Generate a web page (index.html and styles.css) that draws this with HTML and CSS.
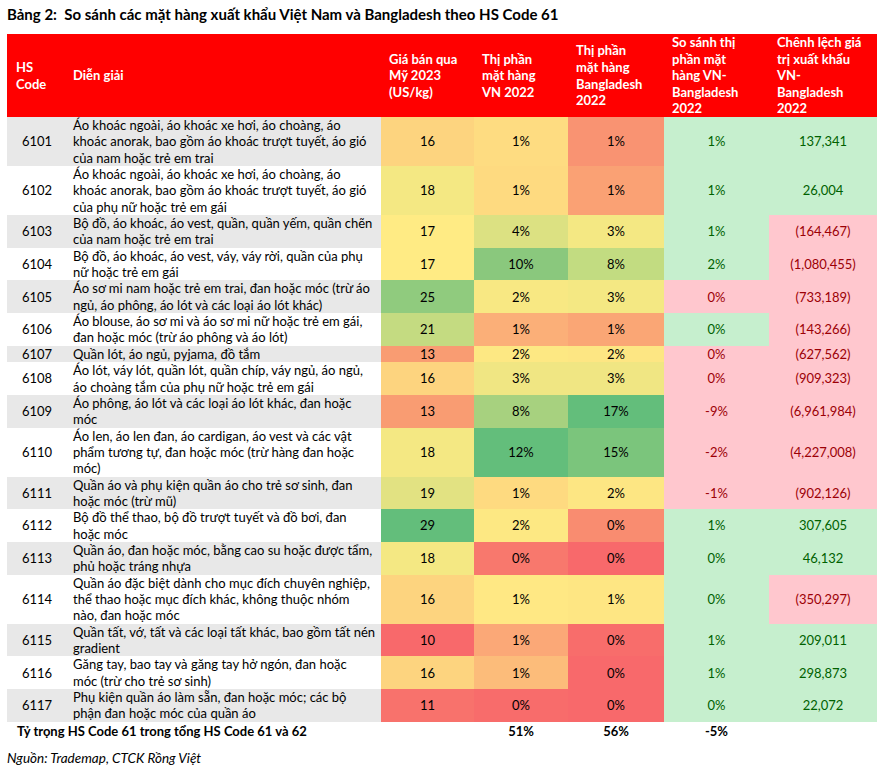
FILE: index.html
```html
<!DOCTYPE html>
<html lang="vi">
<head>
<meta charset="utf-8">
<title>Bảng 2</title>
<link rel="stylesheet" href="styles.css">
</head>
<body>
<div class="page">
  <h1 class="title">Bảng 2:&nbsp; So sánh các mặt hàng xuất khẩu Việt Nam và Bangladesh theo HS Code 61</h1>
  <table class="tbl">
    <colgroup>
      <col class="c-code"><col class="c-desc"><col class="c-price"><col class="c-vn"><col class="c-bd"><col class="c-cmp"><col class="c-diff">
    </colgroup>
    <thead>
      <tr>
        <th>HS<br>Code</th>
        <th>Diễn giải</th>
        <th>Giá bán qua<br>Mỹ 2023<br>(US/kg)</th>
        <th>Thị phần<br>mặt hàng<br>VN 2022</th>
        <th>Thị phần<br>mặt hàng<br>Bangladesh<br>2022</th>
        <th>So sánh thị<br>phần mặt<br>hàng VN-<br>Bangladesh<br>2022</th>
        <th>Chênh lệch giá<br>trị xuất khẩu<br>VN-<br>Bangladesh<br>2022</th>
      </tr>
    </thead>
    <tbody>
      <tr class="odd">
        <td class="code">6101</td>
        <td class="desc">Áo khoác ngoài, áo khoác xe hơi, áo choàng, áo<br>khoác anorak, bao gồm áo khoác trượt tuyết, áo gió<br>của nam hoặc trẻ em trai</td>
        <td class="num" style="background:#FDD47F">16</td>
        <td class="num" style="background:#FEDC81">1%</td>
        <td class="num" style="background:#F99372">1%</td>
        <td class="num good">1%</td>
        <td class="num good">137,341</td>
      </tr>
      <tr>
        <td class="code">6102</td>
        <td class="desc">Áo khoác ngoài, áo khoác xe hơi, áo choàng, áo<br>khoác anorak, bao gồm áo khoác trượt tuyết, áo gió<br>của phụ nữ hoặc trẻ em gái</td>
        <td class="num" style="background:#F4E883">18</td>
        <td class="num" style="background:#FEDA80">1%</td>
        <td class="num" style="background:#FAA174">1%</td>
        <td class="num good">1%</td>
        <td class="num good">26,004</td>
      </tr>
      <tr class="odd">
        <td class="code">6103</td>
        <td class="desc">Bộ đồ, áo khoác, áo vest, quần, quần yếm, quần chẽn<br>của nam hoặc trẻ em trai</td>
        <td class="num" style="background:#FFEB84">17</td>
        <td class="num" style="background:#DCE182">4%</td>
        <td class="num" style="background:#F4E883">3%</td>
        <td class="num good">1%</td>
        <td class="num bad">(164,467)</td>
      </tr>
      <tr>
        <td class="code">6104</td>
        <td class="desc">Bộ đồ, áo khoác, áo vest, váy, váy rời, quần của phụ<br>nữ hoặc trẻ em gái</td>
        <td class="num" style="background:#FFEB84">17</td>
        <td class="num" style="background:#8AC87D">10%</td>
        <td class="num" style="background:#C2DC81">8%</td>
        <td class="num good">2%</td>
        <td class="num bad">(1,080,455)</td>
      </tr>
      <tr class="odd">
        <td class="code">6105</td>
        <td class="desc">Áo sơ mi nam hoặc trẻ em trai, đan hoặc móc (trừ áo<br>ngủ, áo phông, áo lót và các loại áo lót khác)</td>
        <td class="num" style="background:#90CB7E">25</td>
        <td class="num" style="background:#F8E883">2%</td>
        <td class="num" style="background:#F4E883">3%</td>
        <td class="num bad">0%</td>
        <td class="num bad">(733,189)</td>
      </tr>
      <tr>
        <td class="code">6106</td>
        <td class="desc">Áo blouse, áo sơ mi và áo sơ mi nữ hoặc trẻ em gái,<br>đan hoặc móc (trừ áo phông và áo lót)</td>
        <td class="num" style="background:#C4DB81">21</td>
        <td class="num" style="background:#FBAF78">1%</td>
        <td class="num" style="background:#FAA675">1%</td>
        <td class="num good">0%</td>
        <td class="num bad">(143,266)</td>
      </tr>
      <tr class="odd">
        <td class="code">6107</td>
        <td class="desc">Quần lót, áo ngủ, pyjama, đồ tắm</td>
        <td class="num" style="background:#F99C72">13</td>
        <td class="num" style="background:#FDE883">2%</td>
        <td class="num" style="background:#FDE683">2%</td>
        <td class="num bad">0%</td>
        <td class="num bad">(627,562)</td>
      </tr>
      <tr>
        <td class="code">6108</td>
        <td class="desc">Áo lót, váy lót, quần lót, quần chíp, váy ngủ, áo ngủ,<br>áo choàng tắm của phụ nữ hoặc trẻ em gái</td>
        <td class="num" style="background:#FDD47F">16</td>
        <td class="num" style="background:#F0E683">3%</td>
        <td class="num" style="background:#F0E683">3%</td>
        <td class="num bad">0%</td>
        <td class="num bad">(909,323)</td>
      </tr>
      <tr class="odd">
        <td class="code">6109</td>
        <td class="desc">Áo phông, áo lót và các loại áo lót khác, đan hoặc<br>móc</td>
        <td class="num" style="background:#F99C72">13</td>
        <td class="num" style="background:#A7D17F">8%</td>
        <td class="num" style="background:#63BE7B">17%</td>
        <td class="num bad">-9%</td>
        <td class="num bad">(6,961,984)</td>
      </tr>
      <tr>
        <td class="code">6110</td>
        <td class="desc">Áo len, áo len đan, áo cardigan, áo vest và các vật<br>phẩm tương tự, đan hoặc móc (trừ hàng đan hoặc<br>móc)</td>
        <td class="num" style="background:#F4E883">18</td>
        <td class="num" style="background:#63BE7B">12%</td>
        <td class="num" style="background:#7BC57C">15%</td>
        <td class="num bad">-2%</td>
        <td class="num bad">(4,227,008)</td>
      </tr>
      <tr class="odd">
        <td class="code">6111</td>
        <td class="desc">Quần áo và phụ kiện quần áo cho trẻ sơ sinh, đan<br>hoặc móc (trừ mũ)</td>
        <td class="num" style="background:#E2E282">19</td>
        <td class="num" style="background:#FEDA80">1%</td>
        <td class="num" style="background:#FDE683">2%</td>
        <td class="num bad">-1%</td>
        <td class="num bad">(902,126)</td>
      </tr>
      <tr>
        <td class="code">6112</td>
        <td class="desc">Bộ đồ thể thao, bộ đồ trượt tuyết và đồ bơi, đan<br>hoặc móc</td>
        <td class="num" style="background:#63BE7B">29</td>
        <td class="num" style="background:#FDE883">2%</td>
        <td class="num" style="background:#F98C70">0%</td>
        <td class="num good">1%</td>
        <td class="num good">307,605</td>
      </tr>
      <tr class="odd">
        <td class="code">6113</td>
        <td class="desc">Quần áo, đan hoặc móc, bằng cao su hoặc được tẩm,<br>phủ hoặc tráng nhựa</td>
        <td class="num" style="background:#F4E883">18</td>
        <td class="num" style="background:#F8786D">0%</td>
        <td class="num" style="background:#F8696B">0%</td>
        <td class="num good">0%</td>
        <td class="num good">46,132</td>
      </tr>
      <tr>
        <td class="code">6114</td>
        <td class="desc">Quần áo đặc biệt dành cho mục đích chuyên nghiệp,<br>thể thao hoặc mục đích khác, không thuộc nhóm<br>nào, đan hoặc móc</td>
        <td class="num" style="background:#FDD47F">16</td>
        <td class="num" style="background:#FFE884">1%</td>
        <td class="num" style="background:#FEE683">1%</td>
        <td class="num good">0%</td>
        <td class="num bad">(350,297)</td>
      </tr>
      <tr class="odd">
        <td class="code">6115</td>
        <td class="desc">Quần tất, vớ, tất và các loại tất khác, bao gồm tất nén<br>gradient</td>
        <td class="num" style="background:#F8696B">10</td>
        <td class="num" style="background:#FBA877">1%</td>
        <td class="num" style="background:#F86D6B">0%</td>
        <td class="num good">1%</td>
        <td class="num good">209,011</td>
      </tr>
      <tr>
        <td class="code">6116</td>
        <td class="desc">Găng tay, bao tay và găng tay hở ngón, đan hoặc<br>móc (trừ cho trẻ sơ sinh)</td>
        <td class="num" style="background:#FDD47F">16</td>
        <td class="num" style="background:#FCBC7A">1%</td>
        <td class="num" style="background:#F8696B">0%</td>
        <td class="num good">1%</td>
        <td class="num good">298,873</td>
      </tr>
      <tr class="odd">
        <td class="code">6117</td>
        <td class="desc">Phụ kiện quần áo làm sẵn, đan hoặc móc; các bộ<br>phận đan hoặc móc của quần áo</td>
        <td class="num" style="background:#F8726C">11</td>
        <td class="num" style="background:#F86C6B">0%</td>
        <td class="num" style="background:#F8696B">0%</td>
        <td class="num good">0%</td>
        <td class="num good">22,072</td>
      </tr>
    </tbody>
    <tfoot>
      <tr>
        <td class="total-label" colspan="2">Tỷ trọng HS Code 61 trong tổng HS Code 61 và 62</td>
        <td></td>
        <td class="num">51%</td>
        <td class="num">56%</td>
        <td class="num">-5%</td>
        <td></td>
      </tr>
    </tfoot>
  </table>
  <p class="source">Nguồn: Trademap, CTCK Rồng Việt</p>
</div>
</body>
</html>
```

FILE: styles.css
```css
html, body {
  margin: 0;
  padding: 0;
  background: #ffffff;
}

.page {
  padding: 5px 7px 0 7px;
  font-family: Lato, "Noto Sans", sans-serif;
  color: #000000;
}

.title {
  margin: 0;
  font-size: 15px;
  font-weight: 700;
  line-height: 19px;
  height: 29px;
  white-space: nowrap;
}

.tbl {
  border-collapse: collapse;
  table-layout: fixed;
  width: 870px;
  font-size: 13px;
}

.c-code { width: 60px; }
.c-desc { width: 314px; }
.c-price { width: 93px; }
.c-vn { width: 94px; }
.c-bd { width: 96px; }
.c-cmp { width: 105px; }
.c-diff { width: 108px; }

.tbl th {
  background: #ff0000;
  color: #ffffff;
  font-weight: 700;
  text-align: left;
  vertical-align: middle;
  padding: 0 0 0 8px;
  height: 83px;
  line-height: 16.6px;
  white-space: nowrap;
}

.tbl th:first-child {
  padding-left: 9px;
}

.tbl th:nth-child(2) {
  padding-left: 6px;
}

.tbl td {
  padding: 0;
  vertical-align: middle;
  line-height: 16.35px;
}

.tbl tbody tr.odd .code,
.tbl tbody tr.odd .desc {
  background: #e8e8e8;
}

.code {
  text-align: center;
}

.desc {
  padding-left: 6px !important;
  white-space: nowrap;
  overflow: hidden;
}

.num {
  text-align: center;
}

.good {
  background: #c6efce;
  color: #006100;
}

.bad {
  background: #ffc7ce;
  color: #9c0006;
}

.tbl tfoot td {
  font-weight: 700;
  height: 18px;
  line-height: 18px;
}

.total-label {
  padding-left: 10px !important;
  white-space: nowrap;
}

.source {
  margin: 10px 0 0 0;
  font-size: 13.5px;
  font-style: italic;
  line-height: 16px;
}
```
